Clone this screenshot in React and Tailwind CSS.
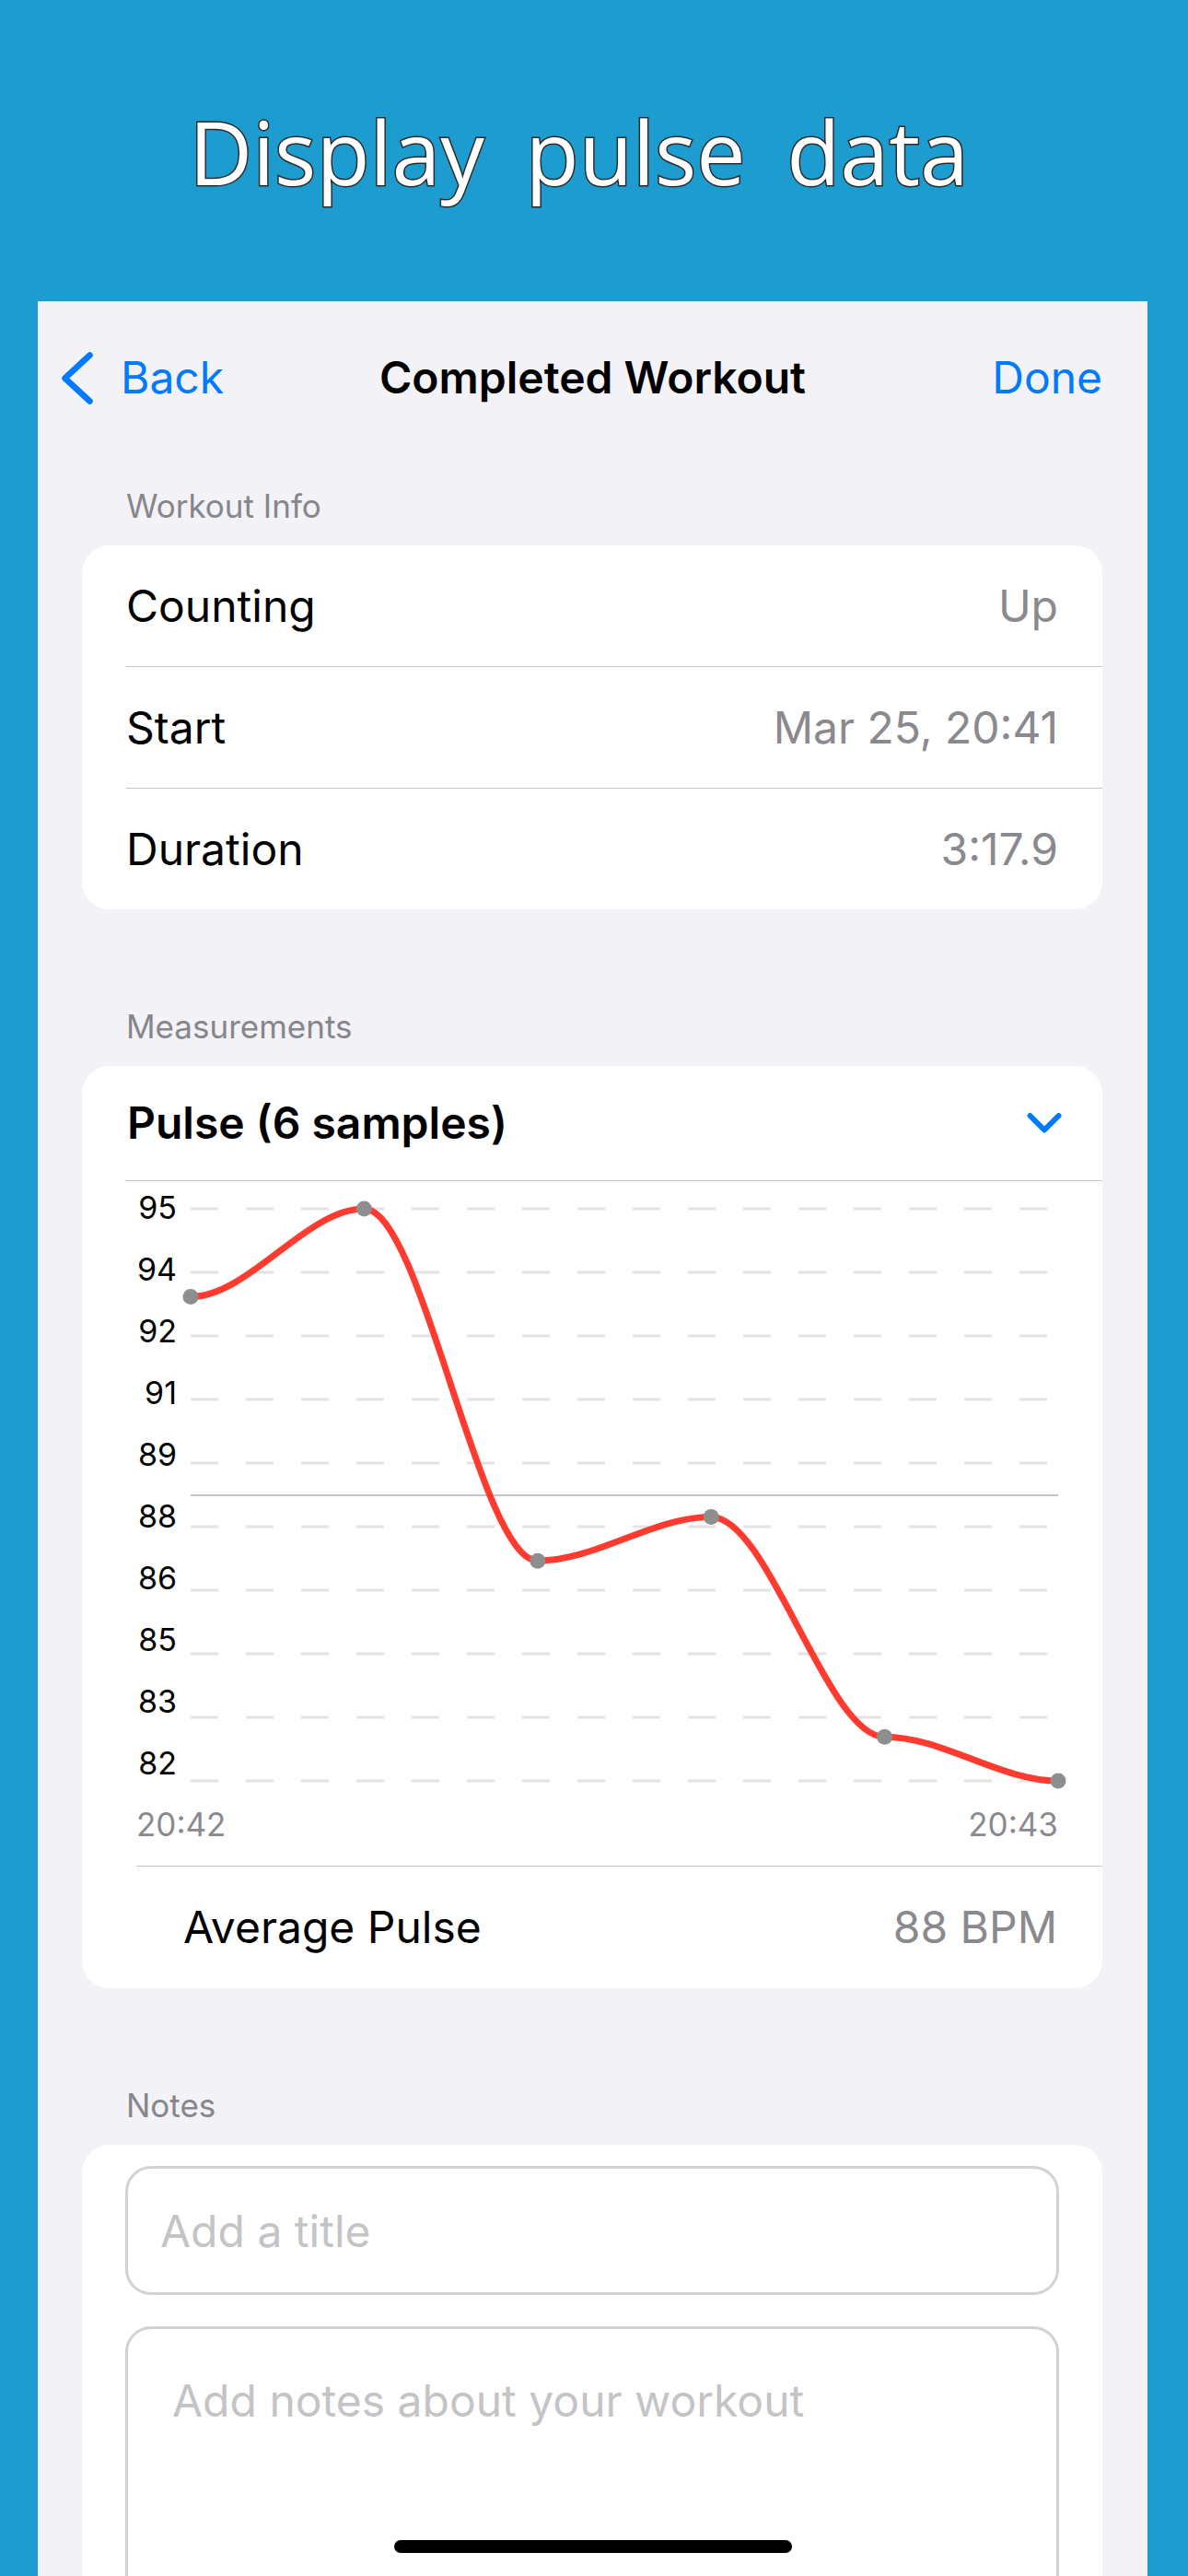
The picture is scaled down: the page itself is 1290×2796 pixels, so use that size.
import React from 'react';

const PULSE = [93, 95, 87, 88, 83, 82];
const Y_TICKS = ['95', '94', '92', '91', '89', '88', '86', '85', '83', '82'];
const PLOT_W = 942;
const PLOT_H = 621;
const MAX = 95;
const MIN = 82;
const AVG_Y = 311;

function toPoints(values) {
  const step = PLOT_W / (values.length - 1);
  return values.map((v, i) => [i * step, ((MAX - v) / (MAX - MIN)) * PLOT_H]);
}

// flat tangent at every sample, like the app's chart
function smoothPath(pts) {
  let d = `M${pts[0][0]},${pts[0][1]}`;
  for (let i = 1; i < pts.length; i++) {
    const [x0, y0] = pts[i - 1];
    const [x1, y1] = pts[i];
    const dx = (x1 - x0) / 3;
    d += ` C${x0 + dx},${y0} ${x1 - dx},${y1} ${x1},${y1}`;
  }
  return d;
}

function SectionHeader({ children, first }) {
  return (
    <div className={`${first ? '' : 'mt-[71px]'} h-[99px] pt-[39px] pl-[96px] text-[35px] leading-none text-[#86868b]`}>
      {children}
    </div>
  );
}

function Divider({ inset }) {
  return <div className={`${inset} h-px bg-[#c6c6c8]`} />;
}

function InfoRow({ label, value }) {
  return (
    <div className="flex h-[131px] items-center justify-between px-[48px] text-[48px] leading-none">
      <span className="text-black">{label}</span>
      <span className="text-[#8a8a8e]">{value}</span>
    </div>
  );
}

function PulseChart() {
  const pts = toPoints(PULSE);
  return (
    <svg
      width={PLOT_W}
      height={PLOT_H}
      viewBox={`0 0 ${PLOT_W} ${PLOT_H}`}
      className="ml-[15px] mt-[30px] shrink-0 overflow-visible"
    >
      {Y_TICKS.map((t, i) => (
        <line key={t} x1="0" x2={PLOT_W} y1={i * 69} y2={i * 69} stroke="#e3e3e5" strokeWidth="3" strokeDasharray="30 30" />
      ))}
      <line x1="0" x2={PLOT_W} y1={AVG_Y} y2={AVG_Y} stroke="#c4c4c6" strokeWidth="2" />
      <path d={smoothPath(pts)} fill="none" stroke="#ff3b30" strokeWidth="7" strokeLinecap="round" />
      {pts.map(([x, y], i) => (
        <circle key={i} cx={x} cy={y} r="8.5" fill="#8e8e8e" />
      ))}
    </svg>
  );
}

export default function App() {
  return (
    <div className="flex h-[2796px] w-[1290px] flex-col overflow-hidden bg-[#1d9dcf] [font-family:Inter,sans-serif]">
      <div className="h-[327px] shrink-0 pt-[117px] pr-[33px] text-center">
        <h1 className="text-[95px] font-normal leading-none text-white [font-family:'Open_Sans',sans-serif] [word-spacing:20px] [-webkit-text-stroke:3px_#2b2b2b] [paint-order:stroke_fill]">
          Display pulse data
        </h1>
      </div>

      <div className="relative ml-[41px] min-h-0 w-[1205px] flex-1 overflow-hidden bg-[#f2f2f7]">
        {/* nav bar */}
        <div className="grid h-[166px] grid-cols-[1fr_auto_1fr] items-center px-[26px] text-[48px] leading-none">
          <div className="flex items-center gap-[30px] text-[#007aff]">
            <svg width="34" height="57" viewBox="0 0 34 57" fill="none">
              <path d="M30.5 3.5 3.5 28.5 30.5 53.5" stroke="currentColor" strokeWidth="6.5" strokeLinecap="round" strokeLinejoin="round" />
            </svg>
            <span>Back</span>
          </div>
          <div className="font-semibold text-black">Completed Workout</div>
          <div className="mr-[23px] justify-self-end text-[#007aff]">Done</div>
        </div>

        <SectionHeader first>Workout Info</SectionHeader>
        <div className="ml-[48px] mr-[49px] overflow-hidden rounded-[30px] bg-white">
          <InfoRow label="Counting" value="Up" />
          <Divider inset="ml-[48px]" />
          <InfoRow label="Start" value="Mar 25, 20:41" />
          <Divider inset="ml-[48px]" />
          <InfoRow label="Duration" value="3:17.9" />
        </div>

        <SectionHeader>Measurements</SectionHeader>
        <div className="ml-[48px] mr-[49px] overflow-hidden rounded-[30px] bg-white">
          <div className="flex h-[124px] items-center justify-between pl-[49px] pr-[44px]">
            <span className="text-[48px] font-semibold leading-none text-black">Pulse (6 samples)</span>
            <svg width="38" height="24" viewBox="0 0 38 24" fill="none" className="text-[#007aff]">
              <path d="M3.5 4 19 19.5 34.5 4" stroke="currentColor" strokeWidth="6" strokeLinecap="round" strokeLinejoin="round" />
            </svg>
          </div>
          <Divider inset="ml-[47px]" />

          <div className="h-[743px]">
            <div className="flex items-start">
              <div className="ml-[47px] mt-[12px] flex h-[637px] w-[56px] shrink-0 flex-col justify-between text-right text-[34px] leading-none text-black">
                {Y_TICKS.map((t) => (
                  <span key={t}>{t}</span>
                ))}
              </div>
              <PulseChart />
            </div>
            <div className="mt-[30px] flex justify-between pl-[59px] pr-[48px] text-[35px] leading-none text-[#8a8a8e]">
              <span>20:42</span>
              <span>20:43</span>
            </div>
          </div>

          <Divider inset="ml-[59px]" />
          <div className="flex h-[132px] items-center justify-between pl-[110px] pr-[49px] text-[48px] leading-none">
            <span className="text-black">Average Pulse</span>
            <span className="text-[#8a8a8e]">88 BPM</span>
          </div>
        </div>

        <SectionHeader>Notes</SectionHeader>
        <div className="ml-[48px] mr-[49px] rounded-[30px] bg-white px-[47px] pt-[23px]">
          <input
            placeholder="Add a title"
            className="block h-[140px] w-full rounded-[28px] border-[3px] border-[#d1d1d6] pl-[35px] text-[48px] leading-none outline-none placeholder:text-[#c4c4c6]"
          />
          <textarea
            placeholder="Add notes about your workout"
            className="mt-[34px] block h-[420px] w-full resize-none rounded-[28px] border-[3px] border-[#d1d1d6] pl-[48px] pt-[54px] text-[48px] leading-none outline-none placeholder:text-[#c4c4c6]"
          />
        </div>

        <div className="absolute bottom-[25px] left-1/2 h-[14px] w-[432px] -translate-x-1/2 rounded-full bg-black" />
      </div>
    </div>
  );
}
